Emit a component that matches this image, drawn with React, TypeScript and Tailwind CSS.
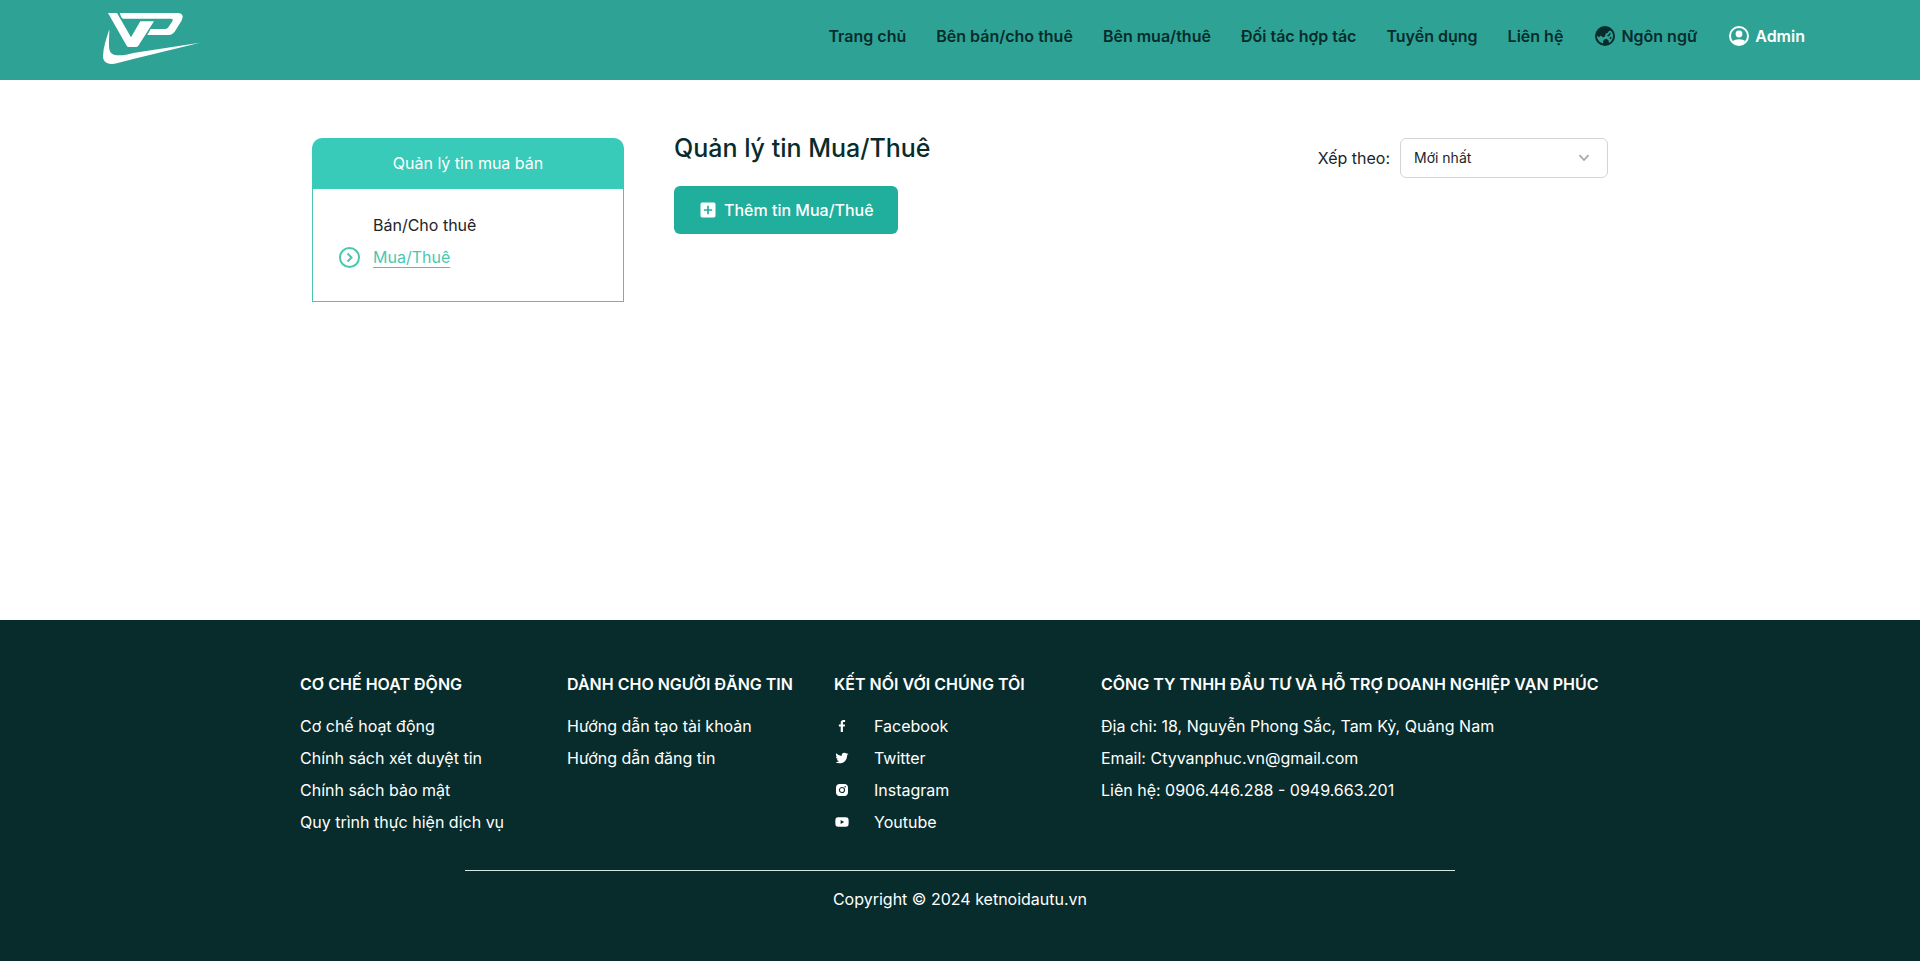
import { BiSolidPlusSquare, BiLogoFacebook, BiLogoTwitter, BiLogoInstagramAlt, BiLogoYoutube } from 'react-icons/bi';

const navLinks = [
  'Trang chủ',
  'Bên bán/cho thuê',
  'Bên mua/thuê',
  'Đối tác hợp tác',
  'Tuyển dụng',
  'Liên hệ',
];

const policies = ['Cơ chế hoạt động', 'Chính sách xét duyệt tin', 'Chính sách bảo mật', 'Quy trình thực hiện dịch vụ'];
const guides = ['Hướng dẫn tạo tài khoản', 'Hướng dẫn đăng tin'];
const socials = [
  { name: 'Facebook', Icon: BiLogoFacebook },
  { name: 'Twitter', Icon: BiLogoTwitter },
  { name: 'Instagram', Icon: BiLogoInstagramAlt },
  { name: 'Youtube', Icon: BiLogoYoutube },
];

function Logo() {
  return (
    <svg viewBox="15 18 294 156" className="h-[52px] w-[98px]" fill="#fff" aria-label="VP" role="img">
      <path d="M30 21H57L99 94L127 46H168L121 119Q118 123 113 123H92Q88 123 86 119Z" />
      <path d="M65 21H238Q252 21 254 31Q255 37 250 45L231 76Q224 87 212 87H148L158 69H202Q208 69 211 64L223 46Q227 38 219 38H76Q72 38 70 34Z" />
      <path d="M34 70C34 112 27 140 48 146C64 151 84 146 110 140L306 110L118 156L56 172C34 178 14 170 15 149C16 122 26 96 34 70Z" />
    </svg>
  );
}

function GlobeIcon() {
  return (
    <svg viewBox="0 0 24 24" className="size-6" aria-hidden="true">
      <circle cx="12" cy="12" r="10" fill="#082c2c" />
      <path
        d="M4 11.6L6 13.2L7.8 11.6L10 13.6L12 12.4L12.6 9.8L14.6 9L15.4 7.4L17.6 6.6C19.4 8.4 20 10.2 20 12C20 14.8 18.6 17.6 16 19L15.6 16.4L13.6 14.8L11.2 15.4L10 17.4L10.2 19.6C6.6 18.8 4 15.6 4 11.6Z"
        fill="#2ea395"
      />
      <path d="M14.2 11.2L16 10.2L16.8 8.6L17.8 9.6L16.8 11.6L15 12.8ZM16.4 14L18 12.6L18.6 14L17.4 15.6Z" fill="#082c2c" />
    </svg>
  );
}

function AccountIcon() {
  return (
    <svg viewBox="0 0 24 24" className="size-6" aria-hidden="true">
      <circle cx="12" cy="12" r="9" fill="none" stroke="currentColor" strokeWidth="2" />
      <circle cx="12" cy="10" r="3.4" fill="currentColor" />
      <path d="M5.4 17.6C7 16 9.4 15.2 12 15.2S17 16 18.6 17.6C17 20 14.6 21 12 21S7 20 5.4 17.6Z" fill="currentColor" />
    </svg>
  );
}

function ChevronCircleIcon() {
  return (
    <svg viewBox="0 0 24 24" className="size-6" fill="none" stroke="currentColor" strokeWidth="2" aria-hidden="true">
      <circle cx="12.5" cy="12.5" r="9.5" />
      <path d="M10.5 8.5L14.5 12.5L10.5 16.5" />
    </svg>
  );
}

function FooterColumn({ title, items }: { title: string; items: string[] }) {
  return (
    <div>
      <h2 className="mb-2.5 whitespace-nowrap font-semibold leading-8">{title}</h2>
      <ul>
        {items.map((item) => (
          <li key={item} className="leading-8">
            <a href="#">{item}</a>
          </li>
        ))}
      </ul>
    </div>
  );
}

export default function App() {
  return (
    <div className="flex min-h-screen flex-col bg-white font-[Inter,sans-serif] text-base text-[#212529]">
      <header className="flex h-20 items-start justify-between bg-[#2ea395] pl-[103px] pr-[115px]">
        <a href="#" className="mt-3">
          <Logo />
        </a>
        <nav className="flex h-[72px] items-center gap-[30px] font-semibold text-[#082c2c]">
          {navLinks.map((label) => (
            <a key={label} href="#">
              {label}
            </a>
          ))}
          <button type="button" className="flex items-center gap-1">
            <GlobeIcon />
            Ngôn ngữ
          </button>
          <button type="button" className="flex items-center gap-1 text-white">
            <AccountIcon />
            Admin
          </button>
        </nav>
      </header>

      <main className="mx-auto flex w-full max-w-[1320px] grow items-start gap-[50px] px-3 pt-[58px]">
        <aside className="w-[312px]">
          <h2 className="rounded-t-[10px] bg-[#38cbb9] text-center leading-[51px] text-white">Quản lý tin mua bán</h2>
          <ul className="border border-t-0 border-[#4cc5b5] pb-7 pl-[60px] pt-5">
            <li className="leading-8">
              <a href="#">Bán/Cho thuê</a>
            </li>
            <li className="-ml-9 flex items-center gap-3 leading-8 text-[#4bc7b0]">
              <ChevronCircleIcon />
              <a href="#" className="underline underline-offset-4">
                Mua/Thuê
              </a>
            </li>
          </ul>
        </aside>
        <section className="flex grow items-start justify-between">
          <div>
            <h1 className="-mt-2 mb-5 text-[25px] font-medium leading-9 text-[#082c2c]">Quản lý tin Mua/Thuê</h1>
            <button type="button" className="flex h-12 items-center gap-1.5 rounded-md bg-[#20ae9d] px-6 font-medium text-white">
              <BiSolidPlusSquare className="size-5" />
              Thêm tin Mua/Thuê
            </button>
          </div>
          <div className="flex items-center gap-2.5">
            <label htmlFor="sort">Xếp theo:</label>
            <div className="relative">
              <select id="sort" className="h-10 w-52 appearance-none rounded-md border border-[#d2d6d9] bg-white px-[13px] text-sm text-[#212529]">
                <option>Mới nhất</option>
              </select>
              <svg viewBox="0 0 12 8" className="pointer-events-none absolute right-[18px] top-4 h-2 w-3" fill="none" stroke="#a5a9ab" strokeWidth="1.8">
                <path d="M1.5 1.2L6 6L10.5 1.2" />
              </svg>
            </div>
          </div>
        </section>
      </main>

      <footer className="bg-[#082c2c] pb-[46px] pt-12 text-white">
        <div className="mx-auto grid w-full max-w-[1320px] grid-cols-[267px_267px_267px_1fr]">
          <FooterColumn title="CƠ CHẾ HOẠT ĐỘNG" items={policies} />
          <FooterColumn title="DÀNH CHO NGƯỜI ĐĂNG TIN" items={guides} />
          <div>
            <h2 className="mb-2.5 font-semibold leading-8">KẾT NỐI VỚI CHÚNG TÔI</h2>
            <ul>
              {socials.map(({ name, Icon }) => (
                <li key={name} className="leading-8">
                  <a href="#" className="flex items-center gap-6">
                    <Icon className="size-4" />
                    {name}
                  </a>
                </li>
              ))}
            </ul>
          </div>
          <div>
            <h2 className="mb-2.5 whitespace-nowrap font-semibold leading-8">CÔNG TY TNHH ĐẦU TƯ VÀ HỖ TRỢ DOANH NGHIỆP VẠN PHÚC</h2>
            <address className="not-italic leading-8">
              <p>Địa chỉ: 18, Nguyễn Phong Sắc, Tam Kỳ, Quảng Nam</p>
              <p>Email: Ctyvanphuc.vn@gmail.com</p>
              <p>Liên hệ: 0906.446.288 - 0949.663.201</p>
            </address>
          </div>
        </div>
        <div className="mx-auto mt-8 w-full max-w-[990px] border-t border-[#d5e6e4] pt-3 text-center leading-8">
          Copyright © 2024 ketnoidautu.vn
        </div>
      </footer>
    </div>
  );
}
